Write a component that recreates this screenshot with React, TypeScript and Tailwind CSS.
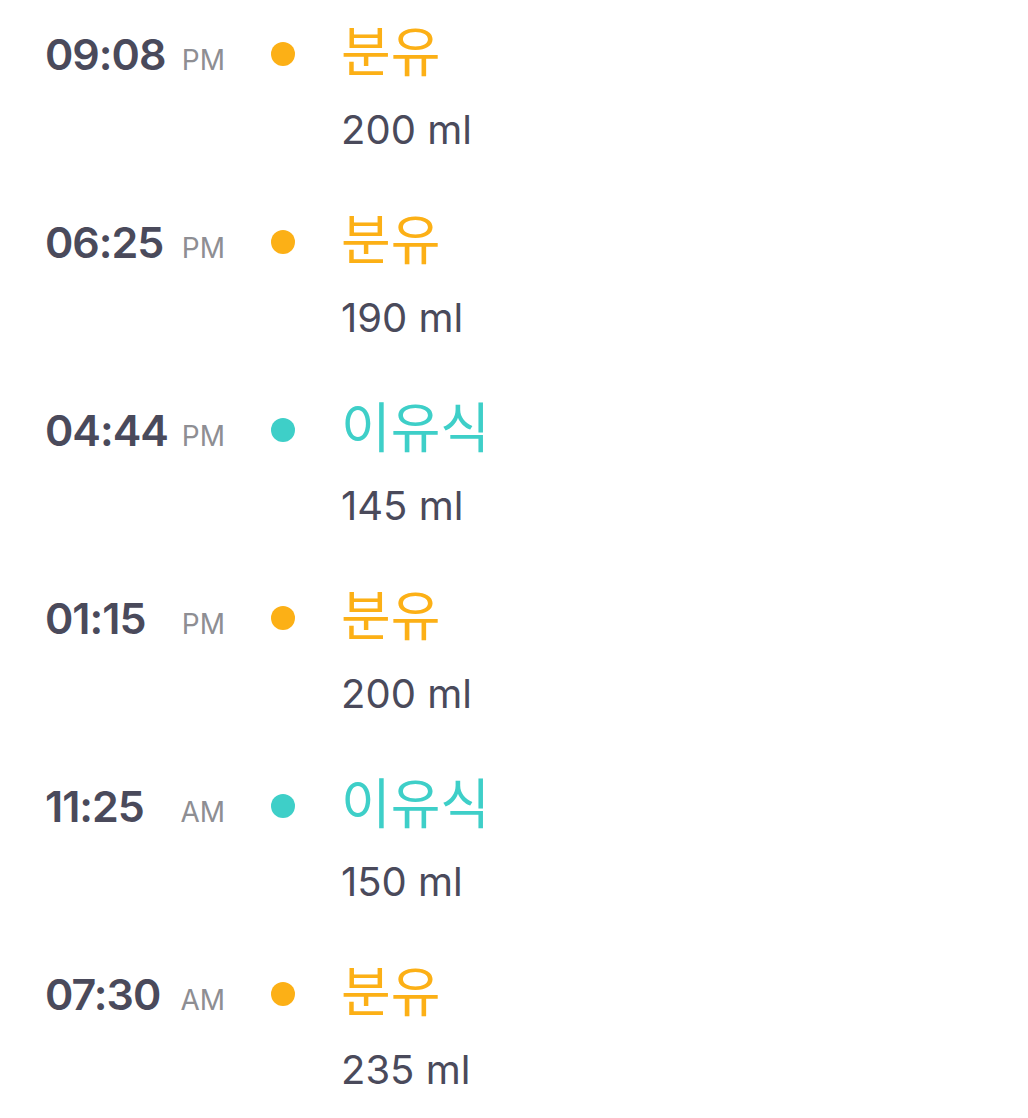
const orange = 'text-[#fcb016]'
const teal = 'text-[#3ecfc8]'

type Feed = { time: string; ampm: string; kind: '분유' | '이유식'; amount: number }

const feeds: Feed[] = [
  { time: '09:08', ampm: 'PM', kind: '분유', amount: 200 },
  { time: '06:25', ampm: 'PM', kind: '분유', amount: 190 },
  { time: '04:44', ampm: 'PM', kind: '이유식', amount: 145 },
  { time: '01:15', ampm: 'PM', kind: '분유', amount: 200 },
  { time: '11:25', ampm: 'AM', kind: '이유식', amount: 150 },
  { time: '07:30', ampm: 'AM', kind: '분유', amount: 235 },
]

function Row({ f }: { f: Feed }) {
  const formula = f.kind === '분유'
  return (
    <div className="flex h-[188px]">
      {/* time + am/pm */}
      <div className="flex w-[180px] items-baseline justify-between pt-[32px]">
        <span className="font-['Inter',sans-serif] text-[43px] font-semibold leading-[44px] tracking-[-1px] text-[#4a4a5b]">
          {f.time}
        </span>
        <span className="font-['Inter',sans-serif] text-[28px] leading-[28px] text-[#8e8e93]">
          {f.ampm}
        </span>
      </div>

      {/* dot */}
      <div
        className={
          'ml-[46px] mt-[42px] h-6 w-6 rounded-full ' + (formula ? 'bg-[#fcb016]' : 'bg-[#3ecfc8]')
        }
      />

      {/* label + amount */}
      <div className="ml-[46px] flex flex-col pt-[21px]">
        <span
          className={
            "font-['Noto_Sans_CJK_KR',sans-serif] text-[54px] leading-[56px] " + (formula ? orange : teal)
          }
        >
          {f.kind}
        </span>
        <span className="mt-[33px] font-['Inter',sans-serif] text-[40px] leading-[40px] text-[#4a4a5b]">
          {f.amount} ml
        </span>
      </div>
    </div>
  )
}

export default function App() {
  return (
    <div className="h-[1118px] w-[1028px] overflow-hidden bg-white pl-[45px]">
      {feeds.map((f) => (
        <Row key={f.time} f={f} />
      ))}
    </div>
  )
}
